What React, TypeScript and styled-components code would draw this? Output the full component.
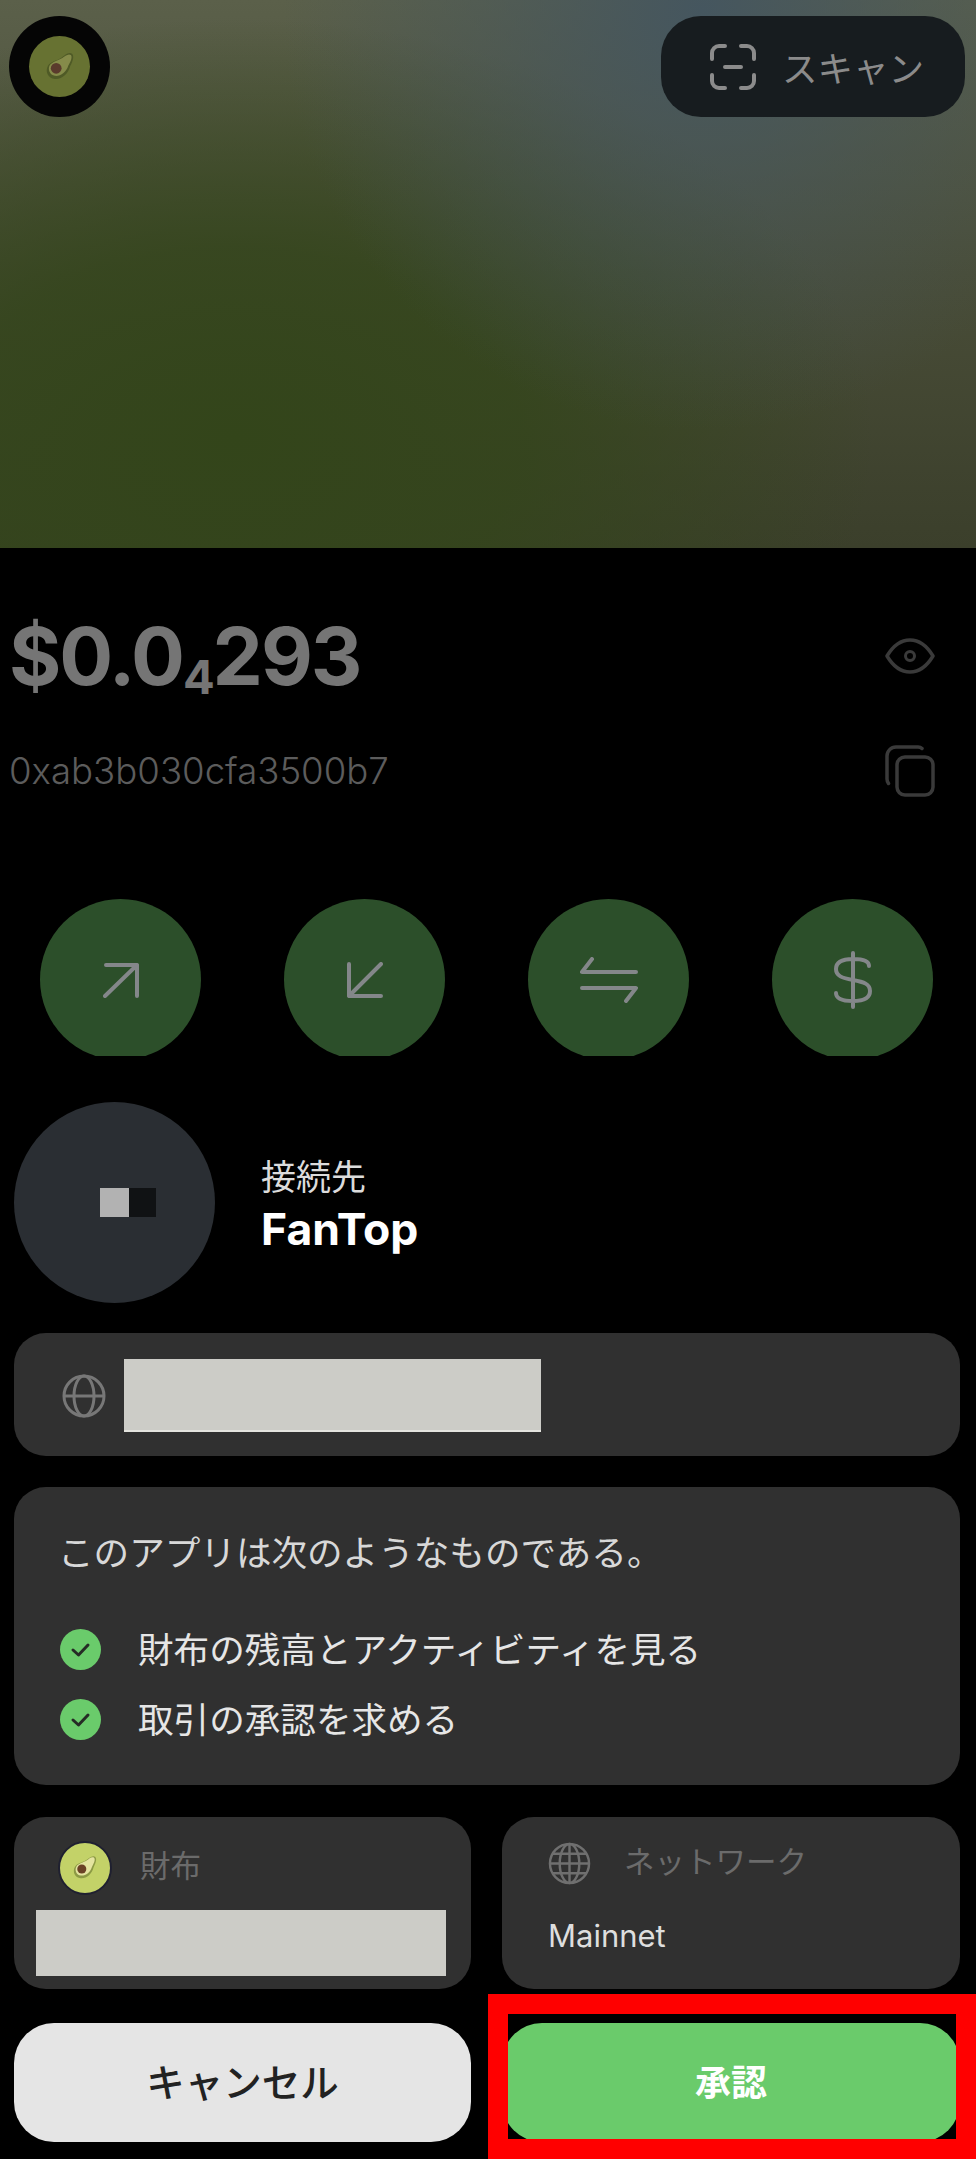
import React from 'react'
import styled, { createGlobalStyle } from 'styled-components'

const GlobalStyle = createGlobalStyle`
  html, body {
    margin: 0;
    padding: 0;
    background: #000;
  }
  * {
    box-sizing: border-box;
  }
`

const sans = `Inter, "Noto Sans CJK JP", sans-serif`

const Page = styled.div`
  position: relative;
  width: 976px;
  height: 2159px;
  overflow: hidden;
  background: #000;
  font-family: ${sans};
  color: #fff;
`

const Hero = styled.header`
  height: 548px;
  padding: 16px 11px 0 9px;
  display: flex;
  justify-content: space-between;
  align-items: flex-start;
  background:
    radial-gradient(ellipse 420px 420px at 72% 2%, #45565f 0%, rgba(69, 86, 95, 0.45) 50%, rgba(69, 86, 95, 0) 100%),
    radial-gradient(ellipse 640px 420px at 24% 80%, #33451a 0%, rgba(51, 69, 26, 0.8) 45%, rgba(51, 69, 26, 0) 100%),
    linear-gradient(180deg, #5b604a 0%, #494d38 50%, #3b3f2b 100%);
`

const AvatarRing = styled.div`
  width: 101px;
  height: 101px;
  border-radius: 50%;
  background: #050505;
  display: flex;
  align-items: center;
  justify-content: center;
`

const AvatarInner = styled.div`
  width: 61px;
  height: 61px;
  border-radius: 50%;
  background: #677232;
  display: flex;
  align-items: center;
  justify-content: center;
`

const ScanButton = styled.div`
  width: 304px;
  height: 101px;
  border-radius: 40px;
  background: #171c1f;
  color: #8b8b8b;
  display: flex;
  align-items: center;
  padding-left: 49px;
  gap: 26px;
  font-size: 35.5px;
`

const Row = styled.div<{ $top: number; $height: number }>`
  margin-top: ${p => p.$top}px;
  height: ${p => p.$height}px;
  padding: 0 41px 0 9px;
  display: flex;
  align-items: center;
  justify-content: space-between;
`

const Balance = styled.div`
  font-size: 80px;
  font-weight: 700;
  line-height: 96px;
  color: #757575;
  letter-spacing: -2.1px;
  white-space: nowrap;
`

const BalanceSub = styled.span`
  font-size: 47px;
  line-height: 0;
  position: relative;
  top: 9px;
`

const Address = styled.div`
  font-size: 36.6px;
  font-weight: 300;
  color: #5c5c5c;
`

const Actions = styled.div`
  margin-top: 102px;
  height: 157px;
  padding-left: 40px;
  display: grid;
  grid-template-columns: repeat(4, 161px);
  column-gap: 83px;
  overflow: hidden;
`

const ActionCircle = styled.div`
  width: 161px;
  height: 161px;
  border-radius: 50%;
  background: #2c4f2a;
  display: flex;
  align-items: center;
  justify-content: center;
`

const Connect = styled.section`
  margin: 46px 0 0 14px;
  height: 201px;
  display: flex;
  align-items: center;
  gap: 46px;
`

const ConnectLogo = styled.div`
  width: 201px;
  height: 201px;
  padding-left: 27px;
  border-radius: 50%;
  background: #2a2e33;
  display: flex;
  align-items: center;
  justify-content: center;
`

const LogoLeft = styled.div`
  width: 29px;
  height: 29px;
  background: #b2b2b2;
`

const LogoRight = styled.div`
  width: 27px;
  height: 29px;
  background: #101214;
`

const ConnectText = styled.div`
  display: flex;
  flex-direction: column;
  gap: 4px;
`

const ConnectLabel = styled.div`
  font-size: 35px;
  line-height: 48px;
  color: #dcdcdc;
`

const ConnectName = styled.div`
  font-size: 44.5px;
  line-height: 48px;
  font-weight: 700;
`

const Card = styled.div`
  background: #303030;
  border-radius: 32px;
`

const UrlCard = styled(Card)`
  margin: 30px 16px 0 14px;
  height: 123px;
  padding: 2px 0 0 48px;
  display: flex;
  align-items: center;
  gap: 18px;
`

const Redacted = styled.div<{ $w: number; $h: number }>`
  width: ${p => p.$w}px;
  height: ${p => p.$h}px;
  background: #ccccc7;
  border-bottom: 2px solid #e4e4df;
`

const PermCard = styled(Card)`
  margin: 31px 16px 0 14px;
  height: 298px;
  padding: 44px 0 0 46px;
`

const PermTitle = styled.div`
  margin-left: -2px;
  font-size: 35.6px;
  line-height: 46px;
  color: #d8d8d8;
`

const PermList = styled.ul`
  list-style: none;
  margin: 47px 0 0;
  padding: 0;
  display: flex;
  flex-direction: column;
  gap: 20.5px;
`

const PermRow = styled.li`
  height: 50px;
  display: flex;
  align-items: center;
  gap: 37px;
  font-size: 35.6px;
  color: #e6e6e6;
`

const PermText = styled.span`
  margin-bottom: 4px;
`

const Pair = styled.div<{ $top: number; $height: number }>`
  margin: ${p => p.$top}px 16px 0 14px;
  height: ${p => p.$height}px;
  display: grid;
  grid-template-columns: 457px 458px;
  column-gap: 31px;
`

const WalletCard = styled(Card)`
  padding: 24px 0 0 22px;
`

const NetworkCard = styled(Card)`
  padding: 25px 0 0 46px;
`

const CardHead = styled.div<{ $indent: number; $gap: number }>`
  margin-left: ${p => p.$indent}px;
  display: flex;
  align-items: center;
  gap: ${p => p.$gap}px;
  font-size: 30.5px;
  line-height: 36px;
  color: #6b6b6b;
`

const HeadLabel = styled.span`
  margin-bottom: 4px;
`

const WalletIcon = styled.div`
  width: 54px;
  height: 54px;
  border-radius: 50%;
  background: #c3d268;
  border: 2px solid #1f2030;
  display: flex;
  align-items: center;
  justify-content: center;
`

const WalletRedacted = styled(Redacted)`
  margin-top: 15px;
  border-bottom: none;
`

const NetworkName = styled.div`
  margin-top: 31px;
  font-size: 31px;
  line-height: 40px;
  color: #dedede;
`

const Button = styled.div<{ $primary?: boolean }>`
  border-radius: 40px;
  display: flex;
  align-items: center;
  justify-content: center;
  padding-bottom: 5px;
  background: ${p => (p.$primary ? '#6acb6b' : '#e5e5e5')};
  color: ${p => (p.$primary ? '#fff' : '#222')};
  font-size: ${p => (p.$primary ? 36 : 38.5)}px;
  font-weight: ${p => (p.$primary ? 700 : 500)};
`

// red marker drawn over the approve button in the screenshot
const Highlight = styled.div`
  position: absolute;
  right: 0;
  bottom: 0;
  width: 488px;
  height: 165px;
  border: 20px solid #ff0000;
  pointer-events: none;
`

const Avocado = ({ size, skin, flesh, seed }: { size: number; skin: string; flesh: string; seed: string }) => (
  <svg width={size} height={size} viewBox="0 0 60 60">
    <path d="M49 9c4 4 1 12-3 20-3 12-13 21-24 20C11 48 6 37 11 28c4-7 14-8 20-12 6-4 13-11 18-7Z" fill={skin} />
    <path d="M47 11c3 3 0 10-4 17-3 10-12 17-21 16-8-1-12-10-8-17 4-6 13-7 19-11 5-3 10-8 14-5Z" fill={flesh} />
    <circle cx="24" cy="32" r="8.5" fill={seed} />
  </svg>
)

const ScanIcon = () => (
  <svg width="46" height="46" viewBox="0 0 46 46" fill="none" stroke="#8b8b8b" strokeWidth="4" strokeLinecap="round">
    <path d="M2 15V9a7 7 0 0 1 7-7h6M31 2h6a7 7 0 0 1 7 7v6M44 31v6a7 7 0 0 1-7 7h-6M15 44H9a7 7 0 0 1-7-7v-6M15 23h16" />
  </svg>
)

const EyeIcon = () => (
  <svg width="50" height="36" viewBox="0 0 50 36" fill="none" stroke="#3a3a3a" strokeWidth="3.5">
    <path d="M2 18C8 8 15 2 25 2s17 6 23 16c-6 10-13 16-23 16S8 28 2 18Z" strokeLinejoin="round" />
    <circle cx="25" cy="18" r="4.500" strokeWidth="3" />
  </svg>
)

const CopyIcon = () => (
  <svg width="50" height="52" viewBox="0 0 50 52" fill="none" stroke="#3a3a3a" strokeWidth="3.5" strokeLinecap="round">
    <path d="M37 3.500c-1-1-2-1.500-4-1.500H11a9 9 0 0 0-9 9v23c0 2 .5 3 1.500 4.500" />
    <rect x="12" y="12" width="36" height="38" rx="8" />
  </svg>
)

const actionProps = { fill: 'none', stroke: '#84878a', strokeWidth: 4, strokeLinecap: 'round' as const, strokeLinejoin: 'round' as const }

const SendIcon = () => (
  <svg width="36" height="36" viewBox="0 0 36 36" {...actionProps}>
    <path d="M3 3h31v31M34 3 2 34" />
  </svg>
)

const ReceiveIcon = () => (
  <svg width="36" height="36" viewBox="0 0 36 36" {...actionProps}>
    <path d="M2 2v32h32M2 34 34 2" />
  </svg>
)

const SwapIcon = () => (
  <svg width="58" height="46" viewBox="0 0 58 46" {...actionProps}>
    <path d="M12 2 2 15h54M46 44l10-13H2" />
  </svg>
)

const DollarIcon = () => (
  <svg width="38" height="58" viewBox="0 0 38 58" {...actionProps}>
    <path d="M19 2v54M35 15c0-5-6-7-16-7S2 10 2 18c0 7 6 9 17 11s17 4 17 11c0 8-7 10-17 10S2 48 2 42" />
  </svg>
)

const GlobeIcon = () => (
  <svg width="44" height="44" viewBox="0 0 44 44" fill="none" stroke="#777" strokeWidth="3">
    <circle cx="22" cy="22" r="20" />
    <ellipse cx="22" cy="22" rx="10" ry="20" />
    <path d="M2 22h40" />
  </svg>
)

const NetworkGlobeIcon = () => (
  <svg width="43" height="43" viewBox="0 0 44 44" fill="none" stroke="#6f6f6f" strokeWidth="2.5">
    <circle cx="22" cy="22" r="20" />
    <ellipse cx="22" cy="22" rx="10" ry="20" />
    <path d="M22 2v40M2 22h40M5 12h34M5 32h34" />
  </svg>
)

const CheckIcon = () => (
  <svg width="41" height="41" viewBox="0 0 41 41">
    <circle cx="20.500" cy="20.500" r="20.500" fill="#6acb6b" />
    <path d="M13 21l5.500 5L28 16" fill="none" stroke="#262b26" strokeWidth="3" strokeLinecap="round" strokeLinejoin="round" />
  </svg>
)

const actions = [<SendIcon key="send" />, <ReceiveIcon key="receive" />, <SwapIcon key="swap" />, <DollarIcon key="dollar" />]
const permissions = ['財布の残高とアクティビティを見る', '取引の承認を求める']

export default function App() {
  return (
    <>
      <GlobalStyle />
      <Page>
        <Hero>
          <AvatarRing>
            <AvatarInner>
              <Avocado size={38} skin="#4f5a26" flesh="#858b4a" seed="#5a3a2c" />
            </AvatarInner>
          </AvatarRing>
          <ScanButton>
            <ScanIcon />
            スキャン
          </ScanButton>
        </Hero>

        <Row $top={60} $height={96}>
          <Balance>
            $0.0<BalanceSub>4</BalanceSub>293
          </Balance>
          <EyeIcon />
        </Row>
        <Row $top={41} $height={52}>
          <Address>0xab3b030cfa3500b7</Address>
          <CopyIcon />
        </Row>

        <Actions>
          {actions.map(icon => (
            <ActionCircle key={icon.key}>{icon}</ActionCircle>
          ))}
        </Actions>

        <Connect>
          <ConnectLogo>
            <LogoLeft />
            <LogoRight />
          </ConnectLogo>
          <ConnectText>
            <ConnectLabel>接続先</ConnectLabel>
            <ConnectName>FanTop</ConnectName>
          </ConnectText>
        </Connect>

        <UrlCard>
          <GlobeIcon />
          <Redacted $w={417} $h={73} />
        </UrlCard>

        <PermCard>
          <PermTitle>このアプリは次のようなものである。</PermTitle>
          <PermList>
            {permissions.map(text => (
              <PermRow key={text}>
                <CheckIcon />
                <PermText>{text}</PermText>
              </PermRow>
            ))}
          </PermList>
        </PermCard>

        <Pair $top={32} $height={172}>
          <WalletCard>
            <CardHead $indent={22} $gap={28}>
              <WalletIcon>
                <Avocado size={32} skin="#8c9a44" flesh="#e4e4a0" seed="#6b4226" />
              </WalletIcon>
              <HeadLabel>財布</HeadLabel>
            </CardHead>
            <WalletRedacted $w={410} $h={66} />
          </WalletCard>
          <NetworkCard>
            <CardHead $indent={0} $gap={33}>
              <NetworkGlobeIcon />
              <HeadLabel>ネットワーク</HeadLabel>
            </CardHead>
            <NetworkName>Mainnet</NetworkName>
          </NetworkCard>
        </Pair>

        <Pair $top={34} $height={119}>
          <Button>キャンセル</Button>
          <Button $primary>承認</Button>
        </Pair>

        <Highlight />
      </Page>
    </>
  )
}
